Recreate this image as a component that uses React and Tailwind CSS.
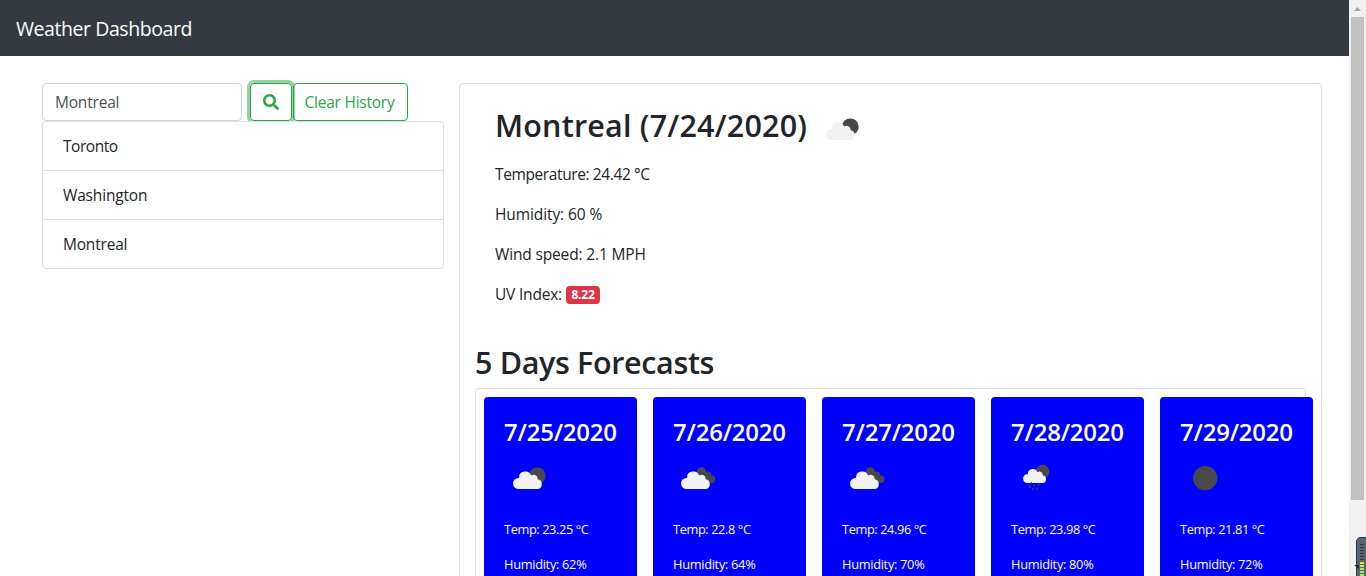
import React from "react";
import { FaSearch } from "react-icons/fa";

const cities = [
  { name: "Toronto", cls: "tracking-[-0.45px]" },
  { name: "Washington", cls: "tracking-[-0.17px]" },
  { name: "Montreal", cls: "tracking-[-0.2px]" },
];

const days = [
  { date: "7/25/2020", icon: "moonCloud", temp: "23.25", hum: 62 },
  { date: "7/26/2020", icon: "clouds", temp: "22.8", hum: 64 },
  { date: "7/27/2020", icon: "clouds", temp: "24.96", hum: 70 },
  { date: "7/28/2020", icon: "rain", temp: "23.98", hum: 80 },
  { date: "7/29/2020", icon: "clear", temp: "21.81", hum: 72 },
];

function Cloud() {
  return (
    <path
      fill="#f2f2f2"
      d="M14.5 36A5.5 5.5 0 0 1 14.5 25H15A6.3 6.3 0 0 1 27.2 22.6A4 4 0 0 1 33.6 26.2A5 5 0 0 1 34 36Z"
    />
  );
}

function WeatherIcon({ kind }) {
  return (
    <svg className="block size-[50px] shrink-0" viewBox="0 0 50 50">
      {kind === "moonCloud" && (
        <>
          <circle cx="33.3" cy="22.8" r="8.4" fill="#48484a" />
          <Cloud />
        </>
      )}
      {kind === "clouds" && (
        <>
          <g fill="#48484a">
            <circle cx="28.3" cy="19" r="4.7" />
            <circle cx="34.8" cy="21.8" r="3.3" />
            <circle cx="38.8" cy="26.3" r="3.7" />
            <path d="M27 20L34 20L37 29L30 29Z" />
          </g>
          <g transform="translate(-1 0)">
            <Cloud />
          </g>
        </>
      )}
      {kind === "rain" && (
        <>
          <circle cx="31.6" cy="18.6" r="6.8" fill="#48484a" />
          <g transform="translate(4.8 1.2) scale(.8)">
            <Cloud />
          </g>
          <path
            stroke="#48484a"
            strokeWidth="1.3"
            d="M20.6 29l-1 1.8M19.2 32.6l-1 2M23.6 31.6l-1 2M28 30.6l-1 2M22.4 35l-1 2M26.4 34.6l-1 2"
          />
        </>
      )}
      {kind === "clear" && <circle cx="25.2" cy="25.1" r="12.2" fill="#48484a" />}
    </svg>
  );
}

function Scrollbar() {
  return (
    <div className="relative flex w-[17px] shrink-0 flex-col items-center bg-[#f1f1f1]">
      <div className="flex h-[17px] items-center">
        <svg className="block h-1 w-[7px]" viewBox="0 0 7 4">
          <path d="M3.5 0L7 4H0Z" fill="#a3a3a3" />
        </svg>
      </div>
      <div className="h-[483px] w-[13px] bg-[#c1c1c1]" />
      <svg className="absolute top-[537px] right-0 h-[39px] w-[12px]" viewBox="0 0 12 39">
        <path d="M2.5 40V3.5L5 .5H13V40Z" fill="#5b6473" stroke="#30343b" />
        <path d="M8 7V25" stroke="#30343b" strokeWidth="4" strokeDasharray="1 2" />
        <path d="M8 25V33" stroke="#e8df3a" strokeWidth="4" strokeDasharray="2 1" />
        <path d="M8 31V39" stroke="#a5e65a" strokeWidth="4" strokeDasharray="2 1" />
        <path d="M0 28H5V32Z" fill="#25282d" />
      </svg>
    </div>
  );
}

export default function App() {
  return (
    <div className="flex h-[576px] w-[1366px] overflow-hidden bg-white font-['Open_Sans','Noto_Sans',sans-serif] text-[15.5px] leading-6 text-[#212529]">
      <div className="flex min-w-0 flex-1 flex-col">
        <nav className="flex h-14 shrink-0 items-center bg-[#343a40] px-4 pt-0.5">
          <span className="text-[19.5px] leading-[30px] tracking-[-0.43px] whitespace-nowrap text-white">Weather Dashboard</span>
        </nav>
        <div className="flex items-start gap-[15px] pt-[27px] pl-[42px]">
          <aside className="w-[402px] shrink-0">
            <div className="flex h-[38px]">
              <div className="mr-2 flex w-[200px] items-center rounded border border-[#ced4da] px-3 tracking-[-0.2px] text-[#495057]">
                Montreal
              </div>
              <button className="flex w-[42px] items-center justify-center rounded border border-[#28a745] text-[#28a745] shadow-[0_0_0_3px_rgba(40,167,69,0.5)]">
                <FaSearch className="size-4" />
              </button>
              <button className="ml-px flex w-[115px] items-center justify-center rounded border border-[#28a745] pr-0.5 tracking-[-0.23px] whitespace-nowrap text-[#28a745]">
                Clear History
              </button>
            </div>
            <ul className="relative divide-y divide-[#dfdfdf] rounded border border-[#dfdfdf] bg-white">
              {cities.map((c) => (
                <li key={c.name} className="box-content flex h-12 items-center px-5">
                  <span className={c.cls}>{c.name}</span>
                </li>
              ))}
            </ul>
          </aside>
          <main className="h-[600px] w-[863px] shrink-0 rounded border border-[#dfdfdf] px-[15px]">
            <section className="h-[258px] px-5 pt-5 whitespace-nowrap">
              <div className="flex h-[58px] items-start">
                <h2 className="w-[322px] pt-0.5 text-[30.5px] leading-[38px] font-semibold tracking-[0.2px]">Montreal (7/24/2020)</h2>
                <WeatherIcon kind="moonCloud" />
              </div>
              <p className="mb-4 tracking-[-0.39px]">Temperature: 24.42 °C</p>
              <p className="mb-4 tracking-[-0.1px]">Humidity: 60 %</p>
              <p className="mb-4 tracking-[-0.15px]">Wind speed: 2.1 MPH</p>
              <p className="flex items-center gap-1 tracking-[-0.2px]">
                <span className="w-[67px]">UV Index:</span>
                <span className="mt-0.5 flex h-[18px] w-[34px] items-center justify-center rounded bg-[#dc3545] text-xs font-bold text-white">
                  8.22
                </span>
              </p>
            </section>
            <h2 className="mb-2 h-[38px] text-[30.5px] leading-[40px] font-semibold tracking-[-0.35px] whitespace-nowrap">5 Days Forecasts</h2>
            <section className="flex h-[260px] gap-4 rounded border border-[#dfdfdf] p-2">
              {days.map((d) => (
                <article key={d.date} className="w-[153px] shrink-0 rounded bg-[#0000ff] px-5 pt-5 whitespace-nowrap text-white">
                  <h4 className="mb-[7px] text-2xl leading-[29px] font-semibold tracking-[-0.22px]">{d.date}</h4>
                  <WeatherIcon kind={d.icon} />
                  <p className="mt-[17px] mb-4 text-[12.8px] leading-[19px] tracking-[-0.4px]">Temp: {d.temp} °C</p>
                  <p className="text-[12.8px] leading-[19px] tracking-[-0.3px]">Humidity: {d.hum}%</p>
                </article>
              ))}
            </section>
          </main>
        </div>
      </div>
      <Scrollbar />
    </div>
  );
}
